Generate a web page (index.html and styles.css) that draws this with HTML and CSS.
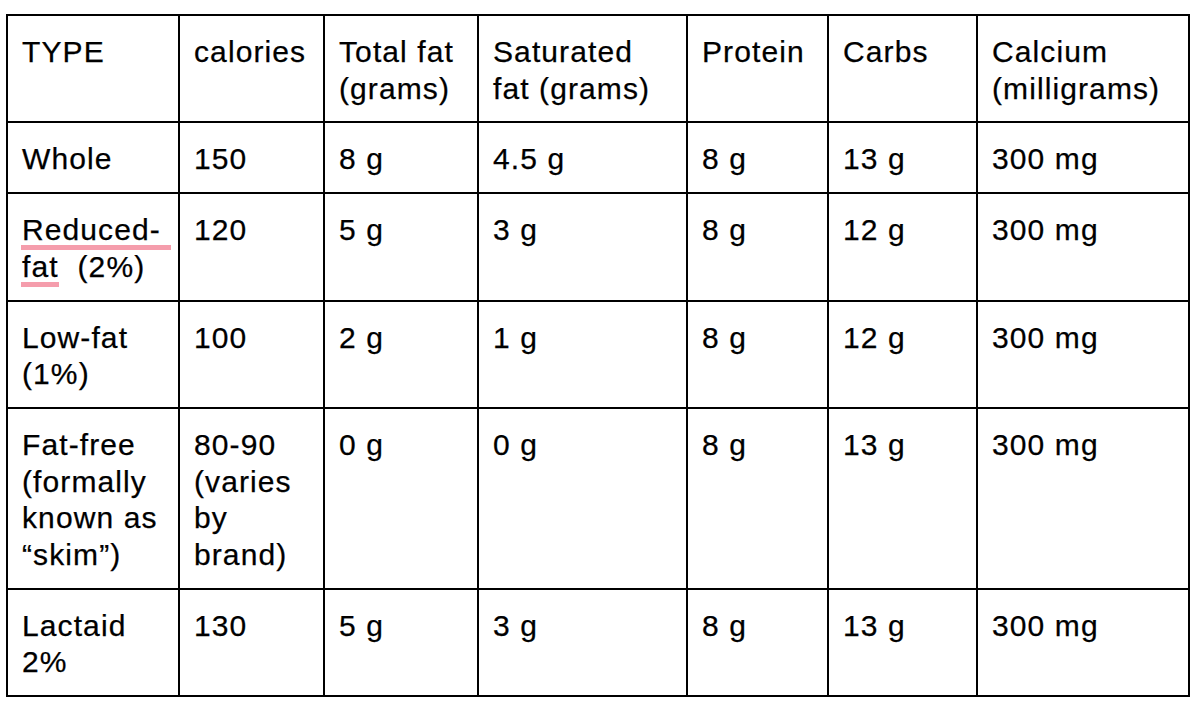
FILE: index.html
```html
<!DOCTYPE html>
<html lang="en">
<head>
<meta charset="utf-8">
<title>Milk nutrition</title>
<link rel="stylesheet" href="styles.css">
</head>
<body>
<table class="nutrition">
  <colgroup>
    <col class="c1"><col class="c2"><col class="c3"><col class="c4"><col class="c5"><col class="c6"><col class="c7">
  </colgroup>
  <tbody>
    <tr>
      <td>TYPE</td>
      <td>calories</td>
      <td>Total fat (grams)</td>
      <td>Saturated fat (grams)</td>
      <td>Protein</td>
      <td>Carbs</td>
      <td>Calcium (milligrams)</td>
    </tr>
    <tr>
      <td>Whole</td>
      <td>150</td>
      <td>8 g</td>
      <td>4.5 g</td>
      <td>8 g</td>
      <td>13 g</td>
      <td>300 mg</td>
    </tr>
    <tr>
      <td><span class="spell spell-ext">Reduced-</span><span class="spell">fat</span>&nbsp; (2%)</td>
      <td>120</td>
      <td>5 g</td>
      <td>3 g</td>
      <td>8 g</td>
      <td>12 g</td>
      <td>300 mg</td>
    </tr>
    <tr>
      <td>Low-fat (1%)</td>
      <td>100</td>
      <td>2 g</td>
      <td>1 g</td>
      <td>8 g</td>
      <td>12 g</td>
      <td>300 mg</td>
    </tr>
    <tr>
      <td>Fat-free (formally known as “skim”)</td>
      <td>80-90 (varies by brand)</td>
      <td>0 g</td>
      <td>0 g</td>
      <td>8 g</td>
      <td>13 g</td>
      <td>300 mg</td>
    </tr>
    <tr>
      <td>Lactaid 2%</td>
      <td>130</td>
      <td>5 g</td>
      <td>3 g</td>
      <td>8 g</td>
      <td>13 g</td>
      <td>300 mg</td>
    </tr>
  </tbody>
</table>
</body>
</html>
```
FILE: styles.css
```css
html, body {
  margin: 0;
  padding: 0;
  background: #ffffff;
}

body {
  font-family: "Liberation Sans", Arial, Helvetica, sans-serif;
  color: #000000;
}

.nutrition {
  border-collapse: collapse;
  table-layout: fixed;
  width: 1184px;
  margin: 14px 0 0 6px;
  font-size: 30px;
  line-height: 36.7px;
  letter-spacing: 1.1px;
  -webkit-text-stroke: 0.25px #000000;
}

.nutrition td {
  border: 2px solid #000000;
  padding: 18px 14px 14px 14px;
  vertical-align: top;
  text-align: left;
}

.c1 { width: 172px; }
.c2 { width: 145px; }
.c3 { width: 154px; }
.c4 { width: 209px; }
.c5 { width: 141px; }
.c6 { width: 149px; }
.c7 { width: 212px; }

.spell {
  background-image: linear-gradient(#f59dac, #f59dac);
  background-repeat: no-repeat;
  background-position: left bottom;
  background-size: 100% 5px;
  padding: 0 0 4px 1px;
  margin-left: -1px;
}

.spell-ext {
  padding-right: 10px;
  margin-right: -10px;
}
```
